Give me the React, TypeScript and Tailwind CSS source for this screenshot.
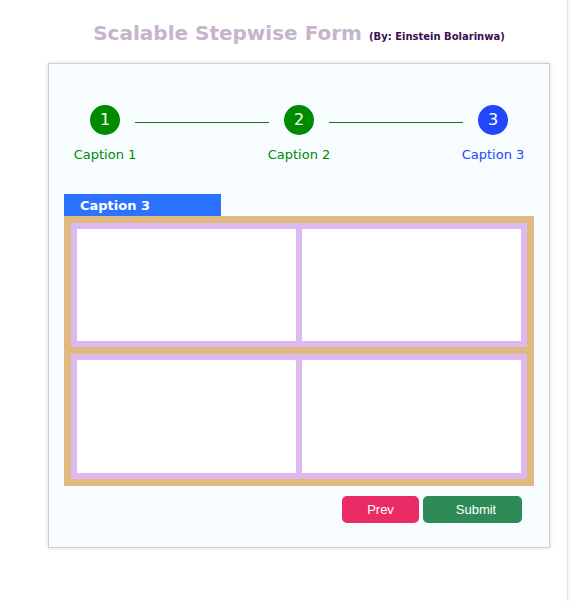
const steps = [
  { n: 1, label: "Caption 1", done: true },
  { n: 2, label: "Caption 2", done: true },
  { n: 3, label: "Caption 3", done: false },
];

function Cell({ tall }: { tall?: boolean }) {
  return <div className={`flex-1 bg-white ${tall ? "h-[113px]" : "h-[112px]"}`} />;
}

export default function App() {
  return (
    <div className="flex min-h-[601px] bg-white font-['DejaVu_Sans',Verdana,sans-serif]">
      <div className="w-[567px] shrink-0">
        {/* title */}
        <div className="ml-[48px] mt-[21px] flex h-[24px] w-[502px] items-baseline justify-center gap-[7px]">
          <span className="text-[20px] font-bold leading-[24px] text-[#c6b5ca]">Scalable Stepwise Form</span>
          <span className="text-[10px] font-bold leading-[12px] text-[#3e0b50]">(By: Einstein Bolarinwa)</span>
        </div>

        {/* card */}
        <div className="ml-[48px] mt-[18px] w-[502px] border border-[#cfcfcf] bg-[#f7fcff] px-[15px] pb-[24px] pt-[41px] shadow-[0_0_4px_rgba(0,0,0,0.15)]">
          {/* stepper */}
          <div className="flex items-start px-[26px]">
            {steps.map((s, i) => (
              <div key={s.n} className="contents">
                <div className="flex w-[30px] flex-col items-center">
                  <div
                    className={`flex h-[30px] w-[30px] items-center justify-center rounded-full text-[16px] text-white ${
                      s.done ? "bg-[#008a00]" : "bg-[#2446fa]"
                    }`}
                  >
                    {s.n}
                  </div>
                  <div
                    className={`mt-[12px] whitespace-nowrap text-[13px] leading-[16px] ${
                      s.done ? "text-[#008a00]" : "text-[#2446fa]"
                    }`}
                  >
                    {s.label}
                  </div>
                </div>
                {i < steps.length - 1 && <div className="mx-[15px] mt-[17px] h-px flex-1 bg-[#1a6e1a]" />}
              </div>
            ))}
          </div>

          {/* tab */}
          <div className="mt-[31px] h-[22px] w-[157px] bg-[#2a72ff] pl-[16px] text-[13px] font-bold leading-[23px] text-white">
            Caption 3
          </div>

          {/* grid */}
          <div className="flex flex-col gap-[7px] bg-[#dfb980] p-[7px]">
            <div className="flex gap-[6px] bg-[#dcb9ef] p-[6px]">
              <Cell />
              <Cell />
            </div>
            <div className="flex gap-[6px] bg-[#dcb9ef] p-[6px]">
              <Cell tall />
              <Cell tall />
            </div>
          </div>

          {/* buttons */}
          <div className="mt-[10px] flex justify-end gap-[4px] pr-[12px] font-['Liberation_Sans',Arial,sans-serif] text-[13px] text-white">
            <button className="h-[27px] w-[77px] rounded-[5px] bg-[#ea2b66]">Prev</button>
            <button className="h-[27px] w-[99px] rounded-[5px] bg-[#2e8b57] pl-[7px]">Submit</button>
          </div>
        </div>
      </div>
      <div className="flex-1 border-l border-[#e6e6e6] bg-[#f7f7f7]" />
    </div>
  );
}
